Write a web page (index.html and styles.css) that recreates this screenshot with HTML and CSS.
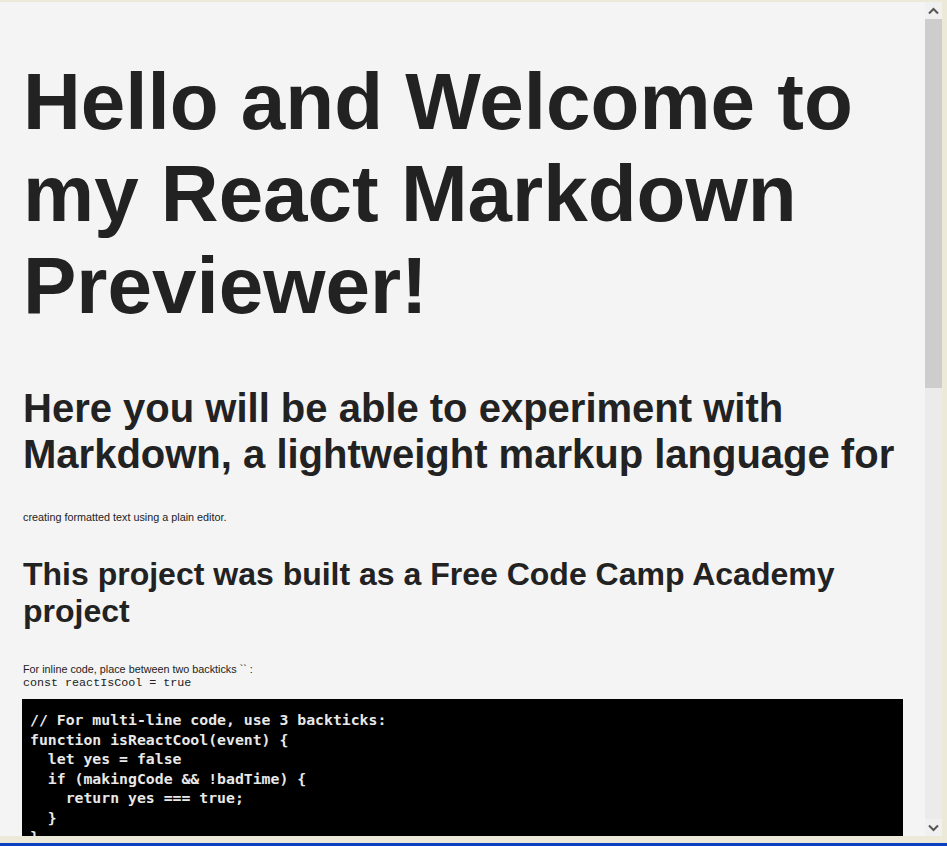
FILE: index.html
```html
<!DOCTYPE html>
<html lang="en">
<head>
<meta charset="utf-8">
<title>React Markdown Previewer</title>
<link rel="stylesheet" href="styles.css">
</head>
<body>
<div class="frame">
  <div class="viewport">
    <div class="preview">
      <h1>Hello and Welcome to my React Markdown Previewer!</h1>
      <h2>Here you will be able to experiment with Markdown, a lightweight markup language for</h2>
      <p class="small">creating formatted text using a plain editor.</p>
      <h3>This project was built as a Free Code Camp Academy project</h3>
      <p class="small before-code">For inline code, place between two backticks `` :<br><code class="inline">const reactIsCool = true</code></p>
      <pre class="block"><code>// For multi-line code, use 3 backticks:
function isReactCool(event) {
  let yes = false
  if (makingCode &amp;&amp; !badTime) {
    return yes === true;
  }
}
</code></pre>
    </div>
  </div>
  <div class="scrollbar">
    <div class="sb-btn">
      <svg width="11" height="8" viewBox="0 0 11 8"><path d="M1 6.5 L5.5 2 L10 6.5" fill="none" stroke="#555" stroke-width="2"/></svg>
    </div>
    <div class="sb-thumb"></div>
    <div class="sb-track"></div>
    <div class="sb-btn">
      <svg width="11" height="8" viewBox="0 0 11 8"><path d="M1 1.5 L5.5 6 L10 1.5" fill="none" stroke="#555" stroke-width="2"/></svg>
    </div>
  </div>
  <div class="edge"></div>
</div>
<div class="bottom-gap"></div>
<div class="taskbar"></div>
</body>
</html>
```
FILE: styles.css
```css
html, body {
  margin: 0;
  padding: 0;
}
body {
  background: #ece9d8;
  height: 846px;
  overflow: hidden;
  font-family: "Liberation Sans", Arial, sans-serif;
}
.frame {
  margin-top: 2px;
  height: 834px;
  display: flex;
}
.viewport {
  width: 925px;
  height: 834px;
  background: #f4f4f4;
  overflow: hidden;
  flex: none;
}
.preview {
  padding: 0 22px 0 23px;
  color: #222222;
  overflow: hidden;
}
.preview h1 {
  font-size: 80px;
  font-weight: bold;
  margin: 53.6px 0;
  line-height: 92px;
}
.preview h2 {
  font-size: 40px;
  font-weight: bold;
  margin: 33px 0 34px;
  line-height: 46px;
}
.preview h3 {
  font-size: 32px;
  font-weight: bold;
  margin: 32px 0 33px;
  line-height: 37px;
}
.preview .small {
  font-size: 10.8px;
  line-height: 13px;
  margin: 11px 0;
}
.preview .before-code {
  margin-bottom: 9px;
}
.inline {
  font-family: "Liberation Mono", "Courier New", monospace;
  font-size: 11.7px;
  line-height: 13px;
}
.block {
  margin: 0 0 0 -1px;
  background: #000;
  color: #e8e8e8;
  padding: 11px 8px 10px;
  font-family: "DejaVu Sans Mono", monospace;
  font-weight: bold;
  font-size: 14.8px;
  line-height: 19.5px;
  white-space: pre;
}
.block code {
  font-family: inherit;
}
.scrollbar {
  width: 17px;
  flex: none;
  display: flex;
  flex-direction: column;
  background: #ebebeb;
}
.sb-btn {
  height: 17px;
  flex: none;
  display: flex;
  align-items: center;
  justify-content: center;
  background: #f0f0f0;
}
.sb-thumb {
  height: 369px;
  flex: none;
  background: #cdcdcd;
}
.sb-track {
  flex: 1;
  background: #ebebeb;
}
.edge {
  flex: 1;
  background: #ece9d8;
}
.bottom-gap {
  height: 7px;
}
.taskbar {
  height: 3px;
  background: #0b40c0;
}
```
